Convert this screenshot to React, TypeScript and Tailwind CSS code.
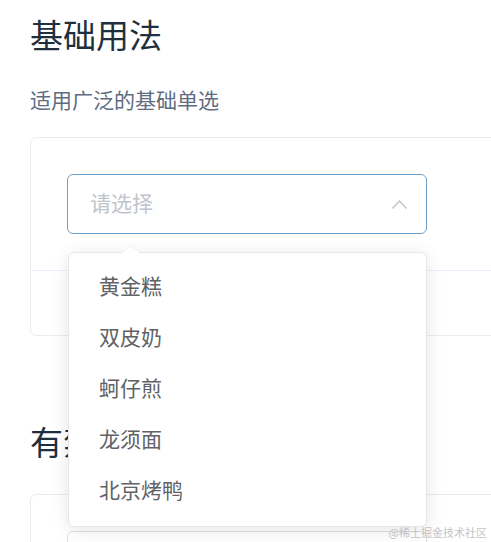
import React from "react";

const font = { fontFamily: '"Noto Sans CJK SC", "Noto Sans", sans-serif' };

const items = ["黄金糕", "双皮奶", "蚵仔煎", "龙须面", "北京烤鸭"];

export default function App() {
  return (
    <div
      className="relative w-[491px] h-[542px] overflow-hidden bg-white"
      style={font}
    >
      <div className="pl-[30px] pt-[10px]">
        <h3 className="text-[33px] leading-[48px] text-[#1f2f3d] font-normal">基础用法</h3>
        <p className="mt-[25px] text-[21px] leading-[32px] text-[#5e6d82]">适用广泛的基础单选</p>
        <div className="mt-[22px] w-[520px] border border-[#ebebeb] rounded-[6px]">
          <div className="p-[36px]">
            <div className="w-[360px] h-[60px] border border-[#6aa0c9] rounded-[6px] flex items-center justify-between pl-[22px] pr-[18px]">
              <span className="text-[21px] text-[#c0c4cc] -mt-[2px]">请选择</span>
              <svg width="17" height="11" viewBox="0 0 17 11" fill="none">
                <polyline points="1.5,9.5 8.5,2 15.5,9.5" stroke="#c0c4cc" strokeWidth="1.5" />
              </svg>
            </div>
          </div>
          <div className="h-[65px] border-t border-[#eaeefb]"></div>
        </div>
        <h3 className="mt-[81px] text-[33px] leading-[48px] text-[#1f2f3d] font-normal">有禁用选项</h3>
        <div className="mt-[29px] w-[520px] h-[200px] border border-[#ebebeb] rounded-[6px] p-[36px]">
          <div className="w-[360px] h-[60px] border border-[#dcdfe6] rounded-[6px]"></div>
        </div>
      </div>

      {/* dropdown */}
      <div className="absolute left-[68px] top-[252px] w-[359px] bg-white border border-[#e4e7ed] rounded-[6px] shadow-[0_3px_18px_rgba(0,0,0,0.1)] pt-[7px] pb-[11px]">
        <svg
          className="absolute left-[52px] top-[-8px]"
          width="20"
          height="9"
          viewBox="0 0 20 9"
        >
          <polygon points="0,9 10,0 20,9" fill="#ffffff" />
          <polyline points="0,9 10,0 20,9" fill="none" stroke="#eef0f4" strokeWidth="1" />
        </svg>
        {items.map((t) => (
          <div key={t} className="h-[51px] flex items-center pl-[30px] text-[21px] text-[#606266]">
            {t}
          </div>
        ))}
      </div>

      <div className="absolute right-[4px] bottom-[3px] text-[11px] leading-[14px] text-[#c4c4c4]">
        @稀土掘金技术社区
      </div>
    </div>
  );
}
